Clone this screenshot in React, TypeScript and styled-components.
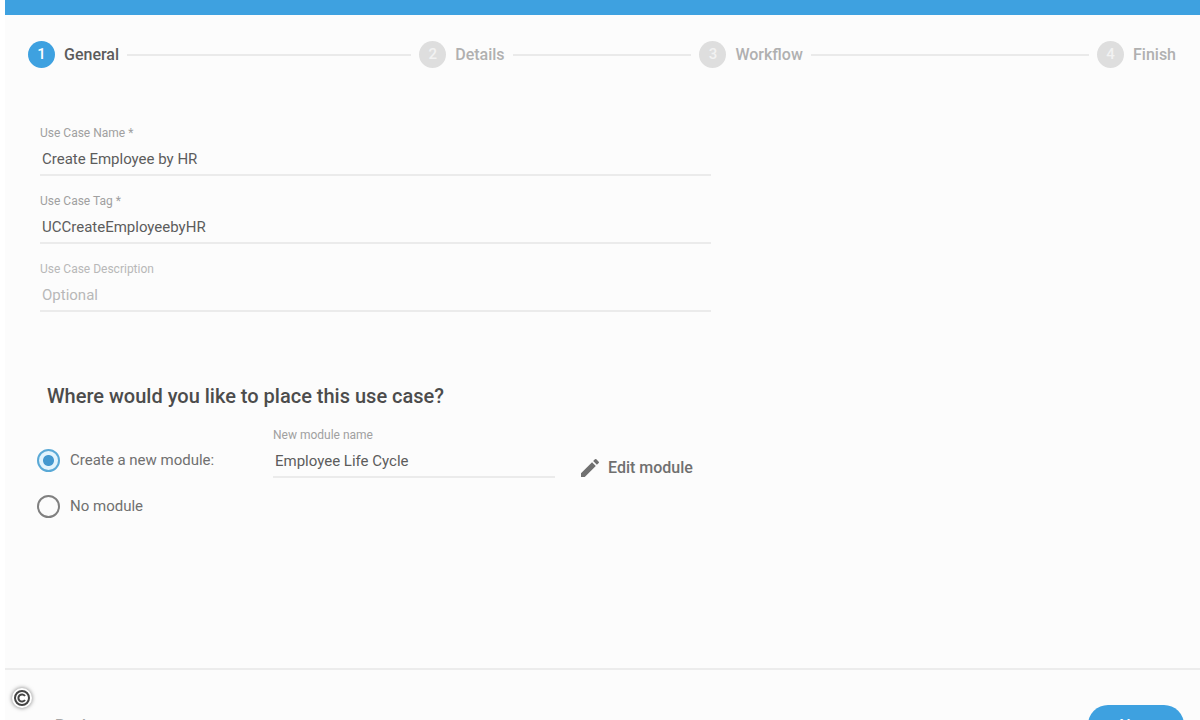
import React, { useState } from "react";
import styled, { createGlobalStyle } from "styled-components";
import { MdEdit } from "react-icons/md";

const GlobalStyle = createGlobalStyle`
  *, *::before, *::after { box-sizing: border-box; }
  html, body { margin: 0; background: #fcfcfc; overflow: hidden; }
  body, input, button { font-family: Roboto, "Liberation Sans", sans-serif; }
`;

const Page = styled.div`
  height: 100vh;
  overflow: hidden;
  border-left: 5px solid #ffffff;
  background: #fcfcfc;
  color: #5c5c5c;
`;

const TopBar = styled.header`
  height: 15px;
  background: #3ea1e0;
`;

const Stepper = styled.ol`
  display: flex;
  align-items: center;
  gap: 8px;
  height: 79px;
  margin: 0;
  padding: 0 24px 0 23px;
  list-style: none;
`;

const Step = styled.li<{ $active: boolean }>`
  display: flex;
  align-items: center;
  gap: 9px;
  font-size: 16px;
  line-height: 24px;
  font-weight: 500;
  color: ${(p) => (p.$active ? "#5c5c5c" : "#b0b0b0")};
`;

const StepNumber = styled.span<{ $active: boolean }>`
  width: 27px;
  height: 27px;
  border-radius: 50%;
  text-align: center;
  font-size: 15px;
  line-height: 27px;
  color: ${(p) => (p.$active ? "#ffffff" : "#f2f2f2")};
  background: ${(p) => (p.$active ? "#3ea1e0" : "#dedede")};
`;

const Connector = styled.li<{ $grow: number }>`
  flex: ${(p) => p.$grow} 1 0;
  height: 2px;
  background: #eaeaea;
`;

const Form = styled.form`
  display: block;
`;

const Content = styled.div`
  height: 574px;
  padding: 30px 35px 0;
`;

const Fields = styled.div`
  max-width: 671px;
`;

const Field = styled.div`
  display: flex;
  flex-direction: column;
  height: 68px;
`;

const FieldLabel = styled.label<{ $muted?: boolean }>`
  font-size: 12px;
  line-height: 18px;
  color: ${(p) => (p.$muted ? "#b8b8b8" : "#a0a0a0")};
`;

const TextInput = styled.input`
  width: 100%;
  height: 34px;
  padding: 2px 2px 0;
  border: 0;
  border-bottom: 2px solid #ebebeb;
  background: transparent;
  font-size: 15px;
  color: #5c5c5c;
  outline: none;
  &::placeholder { color: #b8b8b8; opacity: 1; }
`;

const Placement = styled.fieldset`
  margin: 54px 0 0;
  padding: 0;
  border: 0;
`;

const Question = styled.legend`
  padding: 0 0 0 7px;
  font-size: 20px;
  line-height: 28px;
  font-weight: 500;
  color: #4c4c4c;
`;

const ModuleRow = styled.div`
  display: flex;
  align-items: flex-start;
  padding-top: 16px;
`;

const Choices = styled.div`
  display: flex;
  flex-direction: column;
  gap: 22px;
  width: 233px;
  padding-top: 22px;
`;

const Choice = styled.label`
  display: flex;
  align-items: center;
  gap: 10px;
  height: 24px;
  margin-left: -3px;
  font-size: 15px;
  color: #707070;
`;

const Radio = styled.input`
  appearance: none;
  flex: none;
  width: 23px;
  height: 23px;
  margin: 0;
  border: 2px solid #808080;
  border-radius: 50%;
  background: transparent;
  &:checked {
    border-color: #5aa9d6;
    background: radial-gradient(circle, #4398cf 5px, #e2f4fd 6px);
  }
`;

const ModuleField = styled.div`
  display: flex;
  flex-direction: column;
  width: 282px;
`;

const EditButton = styled.button`
  display: flex;
  align-items: center;
  gap: 6px;
  margin: 30px 0 0 23px;
  padding: 0;
  border: 0;
  background: none;
  font-size: 16px;
  line-height: 24px;
  font-weight: 500;
  color: #707070;
`;

const Footer = styled.footer`
  display: flex;
  align-items: center;
  justify-content: space-between;
  padding: 35px 16px 35px 40px;
  border-top: 2px solid #ececec;
`;

const BackButton = styled.button`
  height: 40px;
  padding: 0 10px;
  border: 0;
  background: none;
  font-size: 16px;
  font-weight: 500;
  color: #a8a8a8;
`;

const NextButton = styled.button`
  width: 96px;
  height: 40px;
  border: 0;
  border-radius: 20px;
  background: #3ea1e0;
  font-size: 16px;
  font-weight: 500;
  color: #ffffff;
`;

const CopyrightMark = styled.svg`
  position: fixed;
  left: 8px;
  bottom: 8px;
  filter: drop-shadow(0 0 2px #777777);
`;

const steps = [
  { name: "General", grow: 286 },
  { name: "Details", grow: 180 },
  { name: "Workflow", grow: 280 },
  { name: "Finish", grow: 0 },
];

export default function App() {
  const [placement, setPlacement] = useState("new");
  return (
    <Page>
      <GlobalStyle />
      <TopBar />
      <Stepper>
        {steps.map((step, i) => (
          <React.Fragment key={step.name}>
            <Step $active={i === 0}>
              <StepNumber $active={i === 0}>{i + 1}</StepNumber>
              {step.name}
            </Step>
            {step.grow > 0 && <Connector $grow={step.grow} aria-hidden="true" />}
          </React.Fragment>
        ))}
      </Stepper>
      <Form onSubmit={(e) => e.preventDefault()}>
        <Content>
          <Fields>
            <Field>
              <FieldLabel htmlFor="name">Use Case Name *</FieldLabel>
              <TextInput id="name" defaultValue="Create Employee by HR" />
            </Field>
            <Field>
              <FieldLabel htmlFor="tag">Use Case Tag *</FieldLabel>
              <TextInput id="tag" defaultValue="UCCreateEmployeebyHR" />
            </Field>
            <Field>
              <FieldLabel htmlFor="description" $muted>Use Case Description</FieldLabel>
              <TextInput id="description" placeholder="Optional" />
            </Field>
          </Fields>
          <Placement>
            <Question>Where would you like to place this use case?</Question>
            <ModuleRow>
              <Choices>
                <Choice>
                  <Radio type="radio" name="placement" checked={placement === "new"} onChange={() => setPlacement("new")} />
                  Create a new module:
                </Choice>
                <Choice>
                  <Radio type="radio" name="placement" checked={placement === "none"} onChange={() => setPlacement("none")} />
                  No module
                </Choice>
              </Choices>
              <ModuleField>
                <FieldLabel htmlFor="module">New module name</FieldLabel>
                <TextInput id="module" defaultValue="Employee Life Cycle" />
              </ModuleField>
              <EditButton type="button">
                <MdEdit size={24} aria-hidden="true" />
                Edit module
              </EditButton>
            </ModuleRow>
          </Placement>
        </Content>
        <Footer>
          <BackButton type="button">Back</BackButton>
          <NextButton type="submit">Next</NextButton>
        </Footer>
      </Form>
      <CopyrightMark width="28" height="28" viewBox="0 0 28 28" aria-label="Copyright" role="img">
        <circle cx="14" cy="14" r="10" fill="#ffffff" />
        <circle cx="14" cy="14" r="7" fill="#ffffff" stroke="#444444" strokeWidth="2" />
        <path d="M17 12a3.6 3.6 0 1 0 0 4" fill="none" stroke="#444444" strokeWidth="2" />
      </CopyrightMark>
    </Page>
  );
}
